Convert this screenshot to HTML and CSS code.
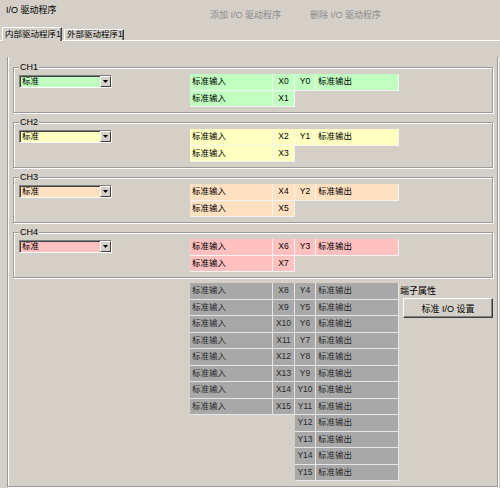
FILE: index.html
```html
<!DOCTYPE html>
<html>
<head>
<meta charset="utf-8">
<link rel="stylesheet" href="styles.css">
</head>
<body>
<div class="header">
  <div class="title">I/O 驱动程序</div>
  <div class="actions">
    <span class="action">添加 I/O 驱动程序</span>
    <span class="action">删除 I/O 驱动程序</span>
  </div>
</div>
<div class="tabs">
  <div class="tab active">内部驱动程序1</div>
  <div class="tab">外部驱动程序1</div>
</div>
<div class="panel">
  <div class="frame">
    <div class="group green">
      <span class="legend">CH1</span>
      <div class="combo"><span class="combo-text">标准</span><span class="combo-btn"><svg width="5" height="3" viewBox="0 0 5 3"><path d="M0 0H5L2.5 3Z" fill="#000"/></svg></span></div>
      <div class="grid">
        <div class="c in">标准输入</div><div class="c x">X0</div><div class="c y">Y0</div><div class="c out">标准输出</div>
        <div class="c in">标准输入</div><div class="c x">X1</div>
      </div>
    </div>
    <div class="group yellow">
      <span class="legend">CH2</span>
      <div class="combo"><span class="combo-text">标准</span><span class="combo-btn"><svg width="5" height="3" viewBox="0 0 5 3"><path d="M0 0H5L2.5 3Z" fill="#000"/></svg></span></div>
      <div class="grid">
        <div class="c in">标准输入</div><div class="c x">X2</div><div class="c y">Y1</div><div class="c out">标准输出</div>
        <div class="c in">标准输入</div><div class="c x">X3</div>
      </div>
    </div>
    <div class="group peach">
      <span class="legend">CH3</span>
      <div class="combo"><span class="combo-text">标准</span><span class="combo-btn"><svg width="5" height="3" viewBox="0 0 5 3"><path d="M0 0H5L2.5 3Z" fill="#000"/></svg></span></div>
      <div class="grid">
        <div class="c in">标准输入</div><div class="c x">X4</div><div class="c y">Y2</div><div class="c out">标准输出</div>
        <div class="c in">标准输入</div><div class="c x">X5</div>
      </div>
    </div>
    <div class="group pink">
      <span class="legend">CH4</span>
      <div class="combo"><span class="combo-text">标准</span><span class="combo-btn"><svg width="5" height="3" viewBox="0 0 5 3"><path d="M0 0H5L2.5 3Z" fill="#000"/></svg></span></div>
      <div class="grid">
        <div class="c in">标准输入</div><div class="c x">X6</div><div class="c y">Y3</div><div class="c out">标准输出</div>
        <div class="c in">标准输入</div><div class="c x">X7</div>
      </div>
    </div>
    <div class="bottom">
      <div class="grid grey">
        <div class="c in">标准输入</div><div class="c x">X8</div><div class="c y">Y4</div><div class="c out">标准输出</div>
        <div class="c in">标准输入</div><div class="c x">X9</div><div class="c y">Y5</div><div class="c out">标准输出</div>
        <div class="c in">标准输入</div><div class="c x">X10</div><div class="c y">Y6</div><div class="c out">标准输出</div>
        <div class="c in">标准输入</div><div class="c x">X11</div><div class="c y">Y7</div><div class="c out">标准输出</div>
        <div class="c in">标准输入</div><div class="c x">X12</div><div class="c y">Y8</div><div class="c out">标准输出</div>
        <div class="c in">标准输入</div><div class="c x">X13</div><div class="c y">Y9</div><div class="c out">标准输出</div>
        <div class="c in">标准输入</div><div class="c x">X14</div><div class="c y">Y10</div><div class="c out">标准输出</div>
        <div class="c in">标准输入</div><div class="c x">X15</div><div class="c y">Y11</div><div class="c out">标准输出</div>
        <div class="c y col3">Y12</div><div class="c out">标准输出</div>
        <div class="c y col3">Y13</div><div class="c out">标准输出</div>
        <div class="c y col3">Y14</div><div class="c out">标准输出</div>
        <div class="c y col3">Y15</div><div class="c out">标准输出</div>
      </div>
      <div class="side">
        <div class="side-label">端子属性</div>
        <div class="btn">标准 I/O 设置</div>
      </div>
    </div>
  </div>
</div>
</body>
</html>
```
FILE: styles.css
```css
* { box-sizing: border-box; }
html, body { margin: 0; padding: 0; }
body {
  background: #d4d0c8;
  width: 500px;
  height: 488px;
  overflow: hidden;
  font-family: "Liberation Sans", "Noto Sans CJK SC", sans-serif;
  font-size: 9px;
  color: #000;
}
.header { display: flex; height: 27px; }
.title { width: 210px; padding: 5px 0 0 6px; line-height: 11px; }
.actions { display: flex; padding-top: 10px; line-height: 11px; color: #8c8c8c; }
.action { width: 100px; white-space: nowrap; }

.tabs {
  display: flex;
  align-items: flex-end;
  height: 14px;
  padding-left: 2px;
  margin-bottom: -1px;
  position: relative;
  z-index: 1;
}
.tab {
  width: 60px;
  height: 11px;
  margin-left: 2px;
  margin-bottom: 1px;
  border-top: 1px solid #fff;
  border-left: 1px solid #fff;
  border-right: 1px solid #404040;
  box-shadow: inset -1px 0 0 #808080;
  padding-left: 2px;
  line-height: 9px;
  font-size: 8.5px;
  white-space: nowrap;
  background: #d4d0c8;
}
.tab.active {
  height: 14px;
  margin-left: 0;
  margin-bottom: 0;
  line-height: 12px;
}

.panel { border-top: 1px solid #fff; padding-top: 16px; }
.frame {
  margin-left: 7px;
  width: 491px;
  height: 430px;
  border: 1px solid #9a9a9a;
  border-top: none;
  box-shadow: 1px 1px 0 #fff, inset 1px 0 0 #fff;
  padding-top: 10px;
}

.group {
  position: relative;
  margin-left: 5px;
  width: 480px;
  height: 46px;
  border: 1px solid #9a9a9a;
  box-shadow: 1px 1px 0 #fff, inset 1px 1px 0 #fff;
  display: flex;
  align-items: flex-start;
  padding: 6px 0 0 5px;
}
.group + .group { margin-top: 9px; }
.legend {
  position: absolute;
  top: -6px;
  left: 5px;
  padding: 0 1px;
  background: #d4d0c8;
  line-height: 11px;
  font-size: 9px;
}

.combo {
  width: 93px;
  height: 13px;
  margin-top: 1px;
  display: flex;
  border: 1px solid;
  border-color: #808080 #fff #fff #808080;
  box-shadow: inset 1px 1px 0 #404040;
}
.combo-text { padding-left: 2px; line-height: 11px; font-size: 8.5px; }
.combo-btn {
  margin-left: auto;
  width: 11px;
  height: 11px;
  background: #d4d0c8;
  border: 1px solid;
  border-color: #fff #404040 #404040 #fff;
  display: flex;
  align-items: center;
  justify-content: center;
}

.grid {
  display: grid;
  grid-template-columns: 83px 22px 21px 83px;
  grid-auto-rows: 16.5px;
  margin-left: 78px;
}
.c {
  border-right: 1px solid #f2f2f2;
  border-bottom: 1px solid #f2f2f2;
  line-height: 15px;
  font-size: 8.5px;
  white-space: nowrap;
  overflow: hidden;
}
.c.in, .c.out { padding-left: 2px; }
.c.x, .c.y { text-align: center; }
.col3 { grid-column: 3; }

.green .c, .green .combo { background: #c0ffc0; }
.yellow .c, .yellow .combo { background: #ffffc0; }
.peach .c, .peach .combo { background: #ffe0c0; }
.pink .c, .pink .combo { background: #ffc0c0; }
.grey .c { background: #a8a8a8; color: #2a2a2a; border-color: #e6e6e6; }

.bottom { display: flex; margin: 5px 0 0 182px; }
.bottom .grid { margin-left: 0; }
.side { margin-left: 1px; padding-top: 3px; }
.side-label { line-height: 11px; font-size: 9px; }
.btn {
  margin: 1px 0 0 3px;
  width: 90px;
  height: 20px;
  border: 1px solid;
  border-color: #fff #404040 #404040 #fff;
  box-shadow: inset -1px -1px 0 #808080;
  display: flex;
  align-items: center;
  justify-content: center;
  font-size: 9px;
  background: #d4d0c8;
}
```
